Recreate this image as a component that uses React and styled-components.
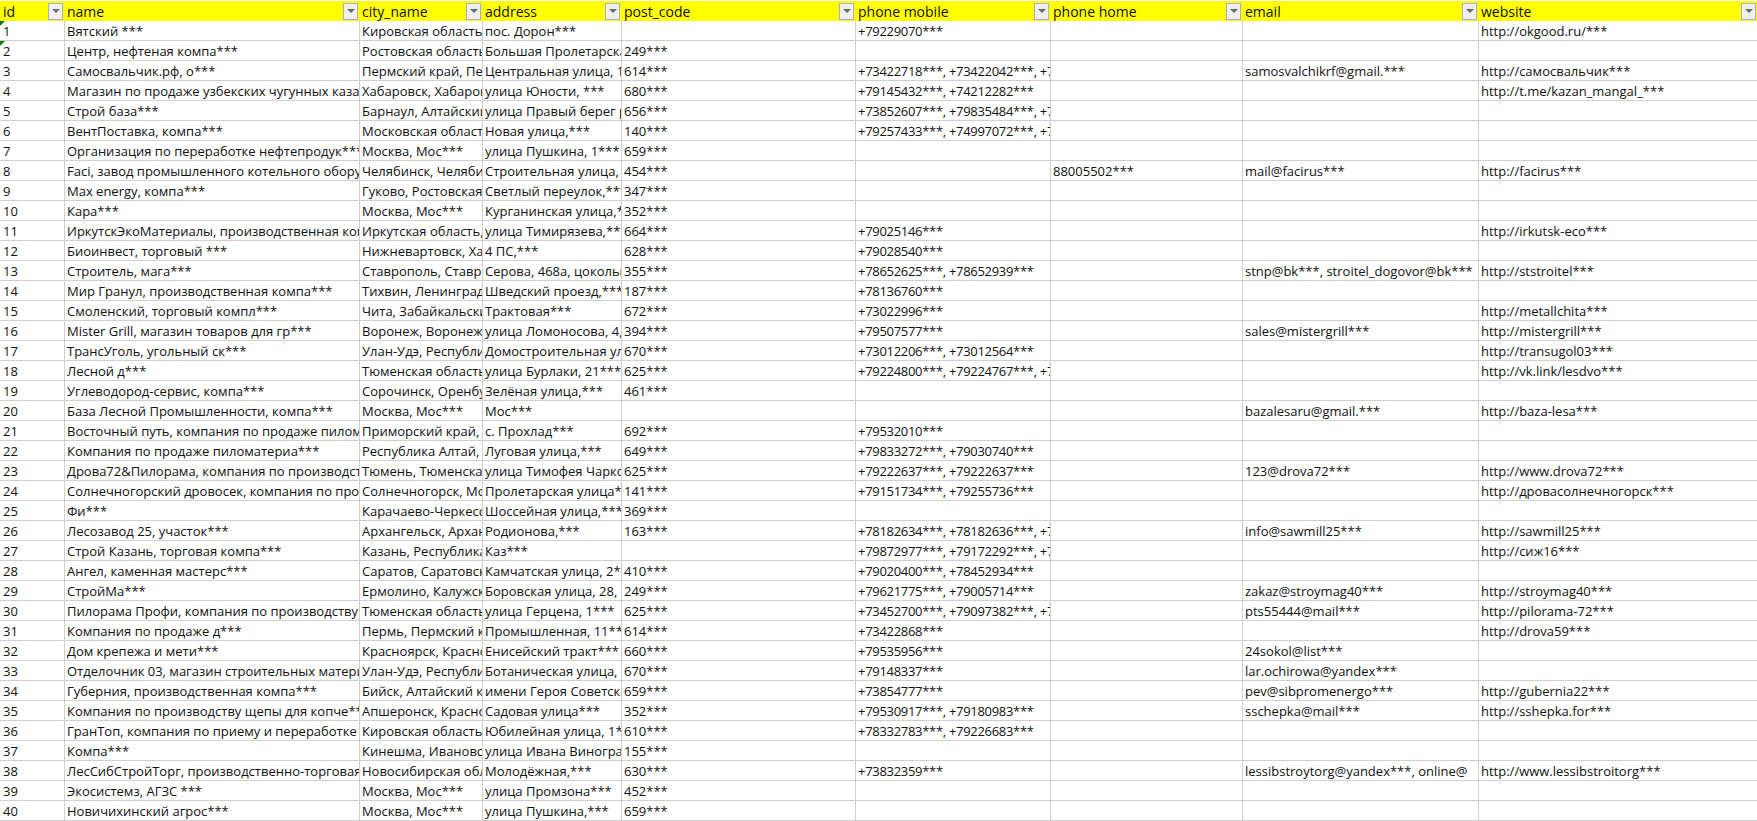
import React from "react";
import styled, { createGlobalStyle } from "styled-components";

const Global = createGlobalStyle`
  html, body { margin: 0; padding: 0; background: #fff; overflow: hidden; }
`;

const COLUMNS = [
  ["id", 64], ["name", 295], ["city_name", 123], ["address", 139], ["post_code", 234],
  ["phone mobile", 195], ["phone home", 192], ["email", 236], ["website", 279],
];
const TEMPLATE = COLUMNS.map((c) => `${c[1]}px`).join(" ");
const PHONE_COLUMN = 5;

const ROWS = [
  ["1","Вятский ***","Кировская область, Слободской","пос. Дорон***","","+79229070***","","","http://okgood.ru/***"],
  ["2","Центр, нефтеная компа***","Ростовская область, Большая","Большая Пролетарская улица","249***","","","",""],
  ["3","Самосвальчик.рф, о***","Пермский край, Пермь","Центральная улица, 1***","614***","+73422718***, +73422042***, +79","","samosvalchikrf@gmail.***","http://самосвальчик***"],
  ["4","Магазин по продаже узбекских чугунных казанов","Хабаровск, Хабаровский","улица Юности, ***","680***","+79145432***, +74212282***","","","http://t.me/kazan_mangal_***"],
  ["5","Строй база***","Барнаул, Алтайский край","улица Правый берег реки","656***","+73852607***, +79835484***, +79","","",""],
  ["6","ВентПоставка, компа***","Московская область, Лыткарино","Новая улица,***","140***","+79257433***, +74997072***, +79","","",""],
  ["7","Организация по переработке нефтепродук***","Москва, Мос***","улица Пушкина, 1***","659***","","","",""],
  ["8","Faci, завод промышленного котельного оборудования","Челябинск, Челябинская","Строительная улица, 1","454***","","88005502***","mail@facirus***","http://facirus***"],
  ["9","Max energy, компа***","Гуково, Ростовская область","Светлый переулок,***","347***","","","",""],
  ["10","Кара***","Москва, Мос***","Курганинская улица,***","352***","","","",""],
  ["11","ИркутскЭкоМатериалы, производственная компания","Иркутская область, Иркутск","улица Тимирязева,***","664***","+79025146***","","","http://irkutsk-eco***"],
  ["12","Биоинвест, торговый ***","Нижневартовск, Ханты","4 ПС,***","628***","+79028540***","","",""],
  ["13","Строитель, мага***","Ставрополь, Ставропольский","Серова, 468а, цокольный","355***","+78652625***, +78652939***","","stnp@bk***, stroitel_dogovor@bk***","http://ststroitel***"],
  ["14","Мир Гранул, производственная компа***","Тихвин, Ленинградская","Шведский проезд,***","187***","+78136760***","","",""],
  ["15","Смоленский, торговый компл***","Чита, Забайкальский край","Трактовая***","672***","+73022996***","","","http://metallchita***"],
  ["16","Mister Grill, магазин товаров для гр***","Воронеж, Воронежская","улица Ломоносова, 4,***","394***","+79507577***","","sales@mistergrill***","http://mistergrill***"],
  ["17","ТрансУголь, угольный ск***","Улан-Удэ, Республика","Домостроительная улица","670***","+73012206***, +73012564***","","","http://transugol03***"],
  ["18","Лесной д***","Тюменская область, Тюмень","улица Бурлаки, 21***","625***","+79224800***, +79224767***, +79","","","http://vk.link/lesdvo***"],
  ["19","Углеводород-сервис, компа***","Сорочинск, Оренбургская","Зелёная улица,***","461***","","","",""],
  ["20","База Лесной Промышленности, компа***","Москва, Мос***","Мос***","","","","bazalesaru@gmail.***","http://baza-lesa***"],
  ["21","Восточный путь, компания по продаже пиломатериалов","Приморский край, Хасанский","с. Прохлад***","692***","+79532010***","","",""],
  ["22","Компания по продаже пиломатериа***","Республика Алтай, Майма","Луговая улица,***","649***","+79833272***, +79030740***","","",""],
  ["23","Дрова72&Пилорама, компания по производству дров","Тюмень, Тюменская область","улица Тимофея Чаркова","625***","+79222637***, +79222637***","","123@drova72***","http://www.drova72***"],
  ["24","Солнечногорский дровосек, компания по продаже дров","Солнечногорск, Московская","Пролетарская улица***","141***","+79151734***, +79255736***","","","http://дровасолнечногорск***"],
  ["25","Фи***","Карачаево-Черкесская","Шоссейная улица,***","369***","","","",""],
  ["26","Лесозавод 25, участок***","Архангельск, Архангельская","Родионова,***","163***","+78182634***, +78182636***, +79","","info@sawmill25***","http://sawmill25***"],
  ["27","Строй Казань, торговая компа***","Казань, Республика Татарстан","Каз***","","+79872977***, +79172292***, +79","","","http://сиж16***"],
  ["28","Ангел, каменная мастерс***","Саратов, Саратовская","Камчатская улица, 2***","410***","+79020400***, +78452934***","","",""],
  ["29","СтройМа***","Ермолино, Калужская","Боровская улица, 28,","249***","+79621775***, +79005714***","","zakaz@stroymag40***","http://stroymag40***"],
  ["30","Пилорама Профи, компания по производству пиломатериалов","Тюменская область, Тюмень","улица Герцена, 1***","625***","+73452700***, +79097382***, +79","","pts55444@mail***","http://pilorama-72***"],
  ["31","Компания по продаже д***","Пермь, Пермский край","Промышленная, 11***","614***","+73422868***","","","http://drova59***"],
  ["32","Дом крепежа и мети***","Красноярск, Красноярский","Енисейский тракт***","660***","+79535956***","","24sokol@list***",""],
  ["33","Отделочник 03, магазин строительных материалов","Улан-Удэ, Республика","Ботаническая улица,","670***","+79148337***","","lar.ochirowa@yandex***",""],
  ["34","Губерния, производственная компа***","Бийск, Алтайский край","имени Героя Советского","659***","+73854777***","","pev@sibpromenergo***","http://gubernia22***"],
  ["35","Компания по производству щепы для копче***","Апшеронск, Краснодарский","Садовая улица***","352***","+79530917***, +79180983***","","sschepka@mail***","http://sshepka.for***"],
  ["36","ГранТоп, компания по приему и переработке","Кировская область, Киров","Юбилейная улица, 1***","610***","+78332783***, +79226683***","","",""],
  ["37","Компа***","Кинешма, Ивановская","улица Ивана Виноградова","155***","","","",""],
  ["38","ЛесСибСтройТорг, производственно-торговая","Новосибирская область","Молодёжная,***","630***","+73832359***","","lessibstroytorg@yandex***, online@","http://www.lessibstroitorg***"],
  ["39","Экосистемз, АГЗС ***","Москва, Мос***","улица Промзона***","452***","","","",""],
  ["40","Новичихинский агрос***","Москва, Мос***","улица Пушкина,***","659***","","","",""],
];

const Sheet = styled.div`
  width: 1757px;
  height: 821px;
  overflow: hidden;
  padding-top: 1px;
  box-sizing: border-box;
  font-family: "Open Sans", "Noto Sans", sans-serif;
  font-size: 13px;
  color: #111;
`;
const HeaderRow = styled.div`
  display: grid;
  grid-template-columns: ${TEMPLATE};
  height: 20px;
  background: #ffff00;
  font-size: 14px;
`;
const HeaderCell = styled.div`
  display: flex;
  align-items: center;
  justify-content: space-between;
  padding: 0 1px 0 3px;
  overflow: hidden;
`;
const FilterButton = styled.span`
  flex: none;
  width: 15px;
  height: 17px;
  box-sizing: border-box;
  display: flex;
  align-items: center;
  justify-content: center;
  background: #f0f0f0;
  border: 1px solid #a9b3bf;
`;
const Caret = styled.span`
  width: 0;
  height: 0;
  border-left: 4px solid transparent;
  border-right: 4px solid transparent;
  border-top: 4px solid #6b6b6b;
`;
const Row = styled.div`
  display: grid;
  grid-template-columns: ${TEMPLATE};
  height: 20px;
  box-sizing: border-box;
  border-bottom: 1px solid #d0d0d0;
`;
const Cell = styled.div`
  position: relative;
  padding-left: ${(p) => (p.$first ? "3px" : "2px")};
  overflow: hidden;
  white-space: nowrap;
  line-height: 20px;
  box-sizing: border-box;
  letter-spacing: ${(p) => (p.$tight ? "-0.3px" : "normal")};
  border-left: ${(p) => (p.$first ? "none" : "1px solid #d0d0d0")};
`;
const Marker = styled.span`
  position: absolute;
  top: 0;
  left: 0;
  width: 0;
  height: 0;
  border-top: 5px solid #107c10;
  border-right: 5px solid transparent;
`;

export default function App() {
  return (
    <>
      <Global />
      <Sheet>
        <HeaderRow>
          {COLUMNS.map(([label]) => (
            <HeaderCell key={label}>
              <span>{label}</span>
              <FilterButton><Caret /></FilterButton>
            </HeaderCell>
          ))}
        </HeaderRow>
        {ROWS.map((row, r) => (
          <Row key={row[0]}>
            {row.map((text, c) => (
              <Cell key={c} $first={c === 0} $tight={c === PHONE_COLUMN}>
                {c === 0 && r < 2 && <Marker />}
                {text}
              </Cell>
            ))}
          </Row>
        ))}
      </Sheet>
    </>
  );
}
